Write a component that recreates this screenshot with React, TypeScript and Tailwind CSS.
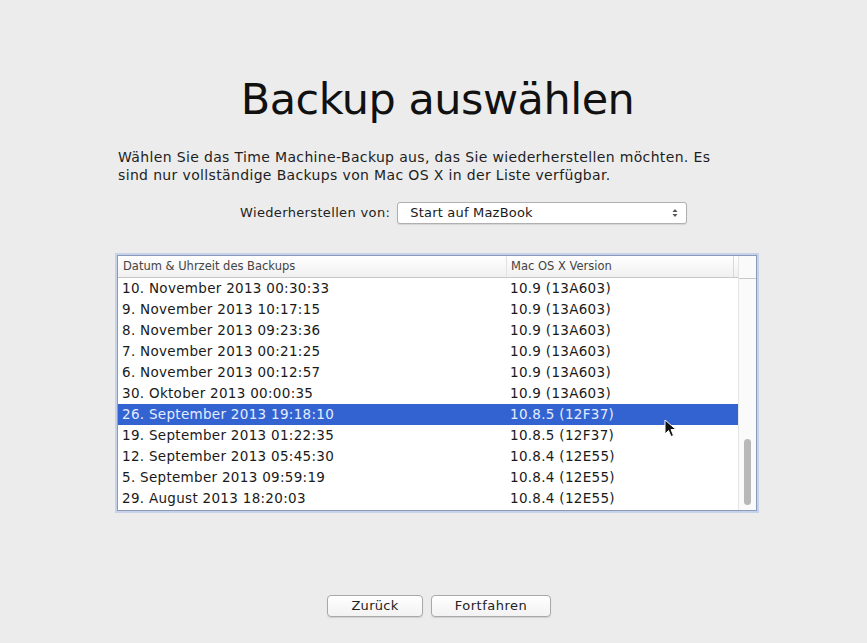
import React from "react";

const rows: [string, string][] = [
  ["10. November 2013 00:30:33", "10.9 (13A603)"],
  ["9. November 2013 10:17:15", "10.9 (13A603)"],
  ["8. November 2013 09:23:36", "10.9 (13A603)"],
  ["7. November 2013 00:21:25", "10.9 (13A603)"],
  ["6. November 2013 00:12:57", "10.9 (13A603)"],
  ["30. Oktober 2013 00:00:35", "10.9 (13A603)"],
  ["26. September 2013 19:18:10", "10.8.5 (12F37)"],
  ["19. September 2013 01:22:35", "10.8.5 (12F37)"],
  ["12. September 2013 05:45:30", "10.8.4 (12E55)"],
  ["5. September 2013 09:59:19", "10.8.4 (12E55)"],
  ["29. August 2013 18:20:03", "10.8.4 (12E55)"],
];

export default function App() {
  return (
    <div
      className="w-[867px] h-[643px] bg-[#ececec] flex flex-col text-[#1c1c1c] overflow-hidden"
      style={{ fontFamily: '"DejaVu Sans", "Noto Sans", sans-serif' }}
    >
      <h1 className="mt-[75px] h-[48px] leading-[48px] text-[43px] text-center text-[#111] pl-[8px] tracking-[-0.5px]">
        Backup auswählen
      </h1>

      <div className="ml-[117px] w-[640px] mt-[25px]">
        <p className="text-[14px] tracking-[0.35px] leading-[18px] text-[#1e1e1e] pl-[1px] whitespace-nowrap">
          Wählen Sie das Time Machine-Backup aus, das Sie wiederherstellen möchten. Es
          <br />
          sind nur vollständige Backups von Mac OS X in der Liste verfügbar.
        </p>

        <div className="mt-[18px] h-[22px] flex items-center ml-[123px]">
          <span className="text-[13px] tracking-[0.35px] text-[#222]">Wiederherstellen von:</span>
          <div className="ml-[7px] w-[290px] h-[22px] bg-white border border-[#b0b0b0] rounded-[3px] shadow-[0_1px_1px_rgba(0,0,0,0.1)] flex items-center pl-[12px] pr-[8px]">
            <span className="text-[13px] tracking-[0.2px] flex-1 text-[#1a1a1a]">Start auf MazBook</span>
            <svg width="6" height="10" viewBox="0 0 6 10">
              <path d="M0.5 4 L3 1 L5.5 4 Z" fill="#555" />
              <path d="M0.5 6 L3 9 L5.5 6 Z" fill="#555" />
            </svg>
          </div>
        </div>

        <div className="relative mt-[31px] h-[256px] bg-white border border-[#8a9ab8] shadow-[0_0_0_2px_rgba(150,180,230,0.45)] flex">
          <div className="flex-1 flex flex-col">
            <div className="h-[22px] flex items-center border-b border-[#c8c8c8] bg-gradient-to-b from-[#ffffff] to-[#f0f0f0] text-[11.5px] text-[#444]">
              <div className="w-[388px] pl-[5px] whitespace-nowrap">Datum &amp; Uhrzeit des Backups</div>
              <div className="flex-1 pl-[4px] h-full flex items-center border-l border-[#e2e2e2] whitespace-nowrap">Mac OS X Version</div>
              <div className="w-[5px] h-full border-l border-[#d8d8d8]" />
            </div>
            {rows.map(([d, v], i) => {
              const sel = i === 6;
              return (
                <div
                  key={i}
                  className={
                    sel
                      ? "h-[21px] flex items-center bg-[#3263d0] text-[#e4ecff] text-[13.5px] tracking-[0.3px]"
                      : "h-[21px] flex items-center text-[#1a1a1a] text-[13.5px] tracking-[0.3px]"
                  }
                >
                  <div className="w-[388px] pl-[4px] whitespace-nowrap">{d}</div>
                  <div className="flex-1 pl-[4px] whitespace-nowrap">{v}</div>
                </div>
              );
            })}
          </div>
          <div className="w-[18px] border-l border-[#e4e4e4] bg-[#fafafa] flex flex-col">
            <div className="h-[23px] border-b border-[#c8c8c8]" />
            <div className="flex-1 flex flex-col justify-end items-center pb-[5px]">
              <div className="w-[7px] h-[66px] rounded-full bg-[#b8b8b8]" />
            </div>
          </div>
          <svg
            className="absolute left-[546px] top-[163px]"
            width="14"
            height="20"
            viewBox="0 0 14 20"
          >
            <path
              d="M1 1 L1 15 L4.5 11.5 L7 17.5 L9.5 16.5 L7 10.5 L12 10.5 Z"
              fill="#111"
              stroke="#fff"
              strokeWidth="1"
            />
          </svg>
        </div>
      </div>

      <div className="mt-[84px] flex justify-center gap-[8px] pl-[11px]">
        <button className="w-[96px] h-[22px] bg-gradient-to-b from-white to-[#f2f2f2] border border-[#a9a9a9] rounded-[4px] text-[13px] tracking-[0.3px] text-[#222] shadow-[0_1px_1px_rgba(0,0,0,0.12)]">
          Zurück
        </button>
        <button className="w-[120px] h-[22px] bg-gradient-to-b from-white to-[#f2f2f2] border border-[#a9a9a9] rounded-[4px] text-[13px] tracking-[0.5px] text-[#222] shadow-[0_1px_1px_rgba(0,0,0,0.12)]">
          Fortfahren
        </button>
      </div>
    </div>
  );
}
